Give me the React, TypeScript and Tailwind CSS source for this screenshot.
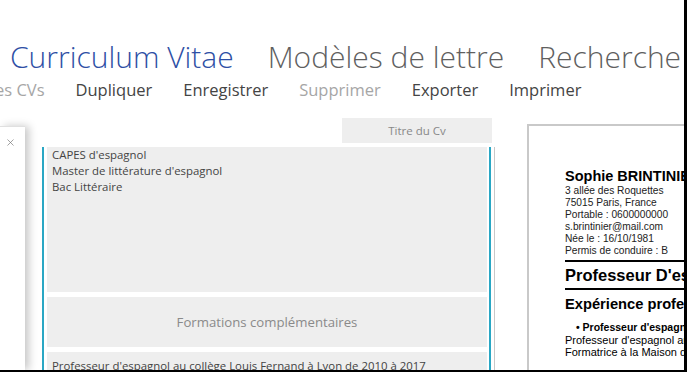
import { X } from "lucide-react";

const tabs = [
  { label: "Curriculum Vitae", active: true },
  { label: "Modèles de lettre", active: false },
  { label: "Recherche", active: false },
];

const actions = [
  { label: "es CVs", disabled: true },
  { label: "Dupliquer", disabled: false },
  { label: "Enregistrer", disabled: false },
  { label: "Supprimer", disabled: true },
  { label: "Exporter", disabled: false },
  { label: "Imprimer", disabled: false },
];

const diplomas = ["CAPES d'espagnol", "Master de littérature d'espagnol", "Bac Littéraire"];

const contact = [
  "3 allée des Roquettes",
  "75015 Paris, France",
  "Portable : 0600000000",
  "s.brintinier@mail.com",
  "Née le : 16/10/1981",
  "Permis de conduire : B",
];

function CvPreview() {
  return (
    <div className="ml-[32px] mt-[6px] flex-1 border-l-2 border-t-2 border-[#c9c9c9] bg-white pl-[36px] pt-[41px] font-['Liberation_Sans',Arial,sans-serif] text-black whitespace-nowrap">
      <div className="text-[14.5px] font-bold leading-[18px]">Sophie BRINTINIER</div>
      <div className="text-[10.2px] leading-[12px] text-[#222]">
        {contact.map((c) => (
          <div key={c}>{c}</div>
        ))}
      </div>
      <div className="mt-[3px] h-[2px] bg-black" />
      <div className="text-[16.5px] font-bold leading-[26px]">Professeur D'espagnol</div>
      <div className="h-[2px] bg-black" />
      <div className="text-[14.7px] font-bold leading-[28px]">Expérience professionnelle</div>
      <div className="mt-[3px] text-[11px] leading-[12.5px]">
        <div className="pl-[11px] text-[10.5px] font-bold">• Professeur d'espagnol</div>
        <div>Professeur d'espagnol au collège Louis Fernand</div>
        <div>Formatrice à la Maison des Langues</div>
      </div>
    </div>
  );
}

export default function App() {
  return (
    <div className="relative flex h-[372px] w-[687px] flex-col overflow-hidden border-b-2 border-r-[3px] border-black bg-white font-['Open_Sans',sans-serif]">
      {/* onglets */}
      <div className="mt-[37px] flex items-center whitespace-nowrap text-[30px] font-light leading-[40px]">
        <span className="mr-[10px] h-[18px] w-[2px] bg-[#2e4fa5]" />
        {tabs.map((t) => (
          <span
            key={t.label}
            className={t.active ? "mr-[34px] text-[#2e4fa5]" : "mr-[34px] text-[#5f5f5f]"}
          >
            {t.label}
          </span>
        ))}
      </div>

      {/* actions */}
      <div className="ml-[-5px] flex gap-[31px] whitespace-nowrap text-[16.5px] leading-[26px]">
        {actions.map((a) => (
          <span key={a.label} className={a.disabled ? "text-[#a6a6a6]" : "text-[#444]"}>
            {a.label}
          </span>
        ))}
      </div>

      <div className="mt-[15px] flex min-h-0 flex-1">
        {/* panneau latéral */}
        <div className="mt-[8px] w-[25px] shrink-0 border-t border-[#e0e0e0] bg-white shadow-[4px_0_8px_rgba(0,0,0,0.22)]">
          <X className="ml-[5px] mt-[10px] h-[11px] w-[11px] text-[#777]" strokeWidth={1.5} />
        </div>

        {/* éditeur */}
        <div className="ml-[17px] flex w-[453px] shrink-0 flex-col">
          <div className="flex justify-end pr-[3px]">
            <div className="h-[25px] w-[150px] bg-[#eeeeee] text-center text-[11.5px] leading-[25px] text-[#888]">
              Titre du Cv
            </div>
          </div>
          <div className="mt-[4px] flex flex-1 border-l-2 border-[#2aa7c4]">
            <div className="flex flex-1 flex-col gap-[5px] pl-[3px] pr-[2px]">
              <div className="h-[145px] bg-[#eeeeee] px-[5px] text-[11.4px] leading-[16px] text-[#444]">
                {diplomas.map((d) => (
                  <div key={d}>{d}</div>
                ))}
              </div>
              <div className="h-[50px] bg-[#eeeeee] text-center text-[13.2px] leading-[50px] text-[#8a8a8a]">
                Formations complémentaires
              </div>
              <div className="flex-1 bg-[#eeeeee] px-[5px] pt-[6px] text-[11.4px] leading-[16px] text-[#444] whitespace-nowrap">
                Professeur d'espagnol au collège Louis Fernand à Lyon de 2010 à 2017
              </div>
            </div>
            <div className="w-[2px] bg-[#2aa7c4]" />
            <div className="ml-[3px] w-px bg-[#c8c8c8]" />
          </div>
        </div>

        <CvPreview />
      </div>
    </div>
  );
}
